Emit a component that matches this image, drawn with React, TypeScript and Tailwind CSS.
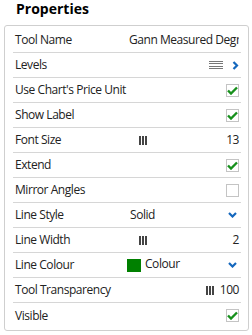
import React from 'react'

type Row = {
  label: string
  kind: 'text' | 'levels' | 'check' | 'slider' | 'select' | 'colour' | 'transparency'
  value?: string
  checked?: boolean
}

const rows: Row[] = [
  { label: 'Tool Name', kind: 'text', value: 'Gann Measured Degr' },
  { label: 'Levels', kind: 'levels' },
  { label: "Use Chart's Price Unit", kind: 'check', checked: true },
  { label: 'Show Label', kind: 'check', checked: true },
  { label: 'Font Size', kind: 'slider', value: '13' },
  { label: 'Extend', kind: 'check', checked: true },
  { label: 'Mirror Angles', kind: 'check', checked: false },
  { label: 'Line Style', kind: 'select', value: 'Solid' },
  { label: 'Line Width', kind: 'slider', value: '2' },
  { label: 'Line Colour', kind: 'colour', value: 'Colour' },
  { label: 'Tool Transparency', kind: 'transparency', value: '100' },
  { label: 'Visible', kind: 'check', checked: true },
]

function Checkbox({ checked }: { checked?: boolean }) {
  return (
    <div className="w-[13px] h-[13px] border border-[#c4c4c4] bg-white flex items-center justify-center">
      {checked && (
        <svg width="11" height="9" viewBox="0 0 11 9">
          <path d="M1 4.5 L4 7.5 L10 1.5" fill="none" stroke="#17901c" strokeWidth="2.4" />
        </svg>
      )}
    </div>
  )
}

function Bars() {
  return (
    <div className="flex gap-[1px] h-[9px]">
      <div className="w-[2px] h-full bg-[#444]" />
      <div className="w-[2px] h-full bg-[#444]" />
      <div className="w-[2px] h-full bg-[#444]" />
    </div>
  )
}

function ChevronDown() {
  return (
    <svg width="9" height="6" viewBox="0 0 9 6">
      <path d="M1 1 L4.5 4.5 L8 1" fill="none" stroke="#1467bd" strokeWidth="2.2" />
    </svg>
  )
}

function RowValue({ row }: { row: Row }) {
  switch (row.kind) {
    case 'text':
      return <div className="pl-[2px] overflow-hidden whitespace-nowrap">{row.value}</div>
    case 'levels':
      return (
        <div className="flex-1 flex items-center justify-end">
          <div className="flex flex-col gap-[1.4px] w-[14px] mr-[9px]">
            <div className="h-[1px] bg-[#777]" />
            <div className="h-[1px] bg-[#777]" />
            <div className="h-[1px] bg-[#777]" />
            <div className="h-[1px] bg-[#777]" />
          </div>
          <svg width="7" height="9" viewBox="0 0 7 9">
            <path d="M1.5 1 L5 4.5 L1.5 8" fill="none" stroke="#1467bd" strokeWidth="2.2" />
          </svg>
        </div>
      )
    case 'check':
      return (
        <div className="flex-1 flex justify-end">
          <Checkbox checked={row.checked} />
        </div>
      )
    case 'slider':
      return (
        <div className="flex-1 flex items-center">
          <div className="ml-[12px]">
            <Bars />
          </div>
          <div className="ml-auto">{row.value}</div>
        </div>
      )
    case 'select':
      return (
        <div className="flex-1 flex items-center">
          <div className="pl-[3px]">{row.value}</div>
          <div className="ml-auto mr-[2px]">
            <ChevronDown />
          </div>
        </div>
      )
    case 'colour':
      return (
        <div className="flex-1 flex items-center">
          <div className="w-[14px] h-[13px] bg-[#008000]" />
          <div className="ml-[4px] -mt-[2px]">{row.value}</div>
          <div className="ml-auto mr-[2px]">
            <ChevronDown />
          </div>
        </div>
      )
    case 'transparency':
      return (
        <div className="flex-1 flex items-center justify-end">
          <div className="mr-[6px]">
            <Bars />
          </div>
          <div>{row.value}</div>
        </div>
      )
  }
}

export default function App() {
  return (
    <div
      className="w-[252px] h-[335px] bg-white text-[#222]"
      style={{ fontFamily: '"Open Sans", "Liberation Sans", sans-serif' }}
    >
      <div className="h-[25px] pl-[16px] text-[14px] leading-[17px] font-bold text-black">Properties</div>
      <div className="ml-[4px] w-[245px] border border-[#cfcfcf] rounded-[3px] pl-[8px] pr-[7px] pt-[2px] pb-[2px]">
        {rows.map((row, i) => (
          <div
            key={row.label}
            className={`h-[25px] flex items-center pl-[2px] pr-[2px] text-[12px] leading-[16px] tracking-[-0.45px] ${
              i < rows.length - 1 ? 'border-b border-[#d6d6d6]' : ''
            }`}
          >
            <div className="w-[112px] shrink-0 whitespace-nowrap">{row.label}</div>
            <div className="flex-1 flex items-center min-w-0">
              <RowValue row={row} />
            </div>
          </div>
        ))}
      </div>
    </div>
  )
}
